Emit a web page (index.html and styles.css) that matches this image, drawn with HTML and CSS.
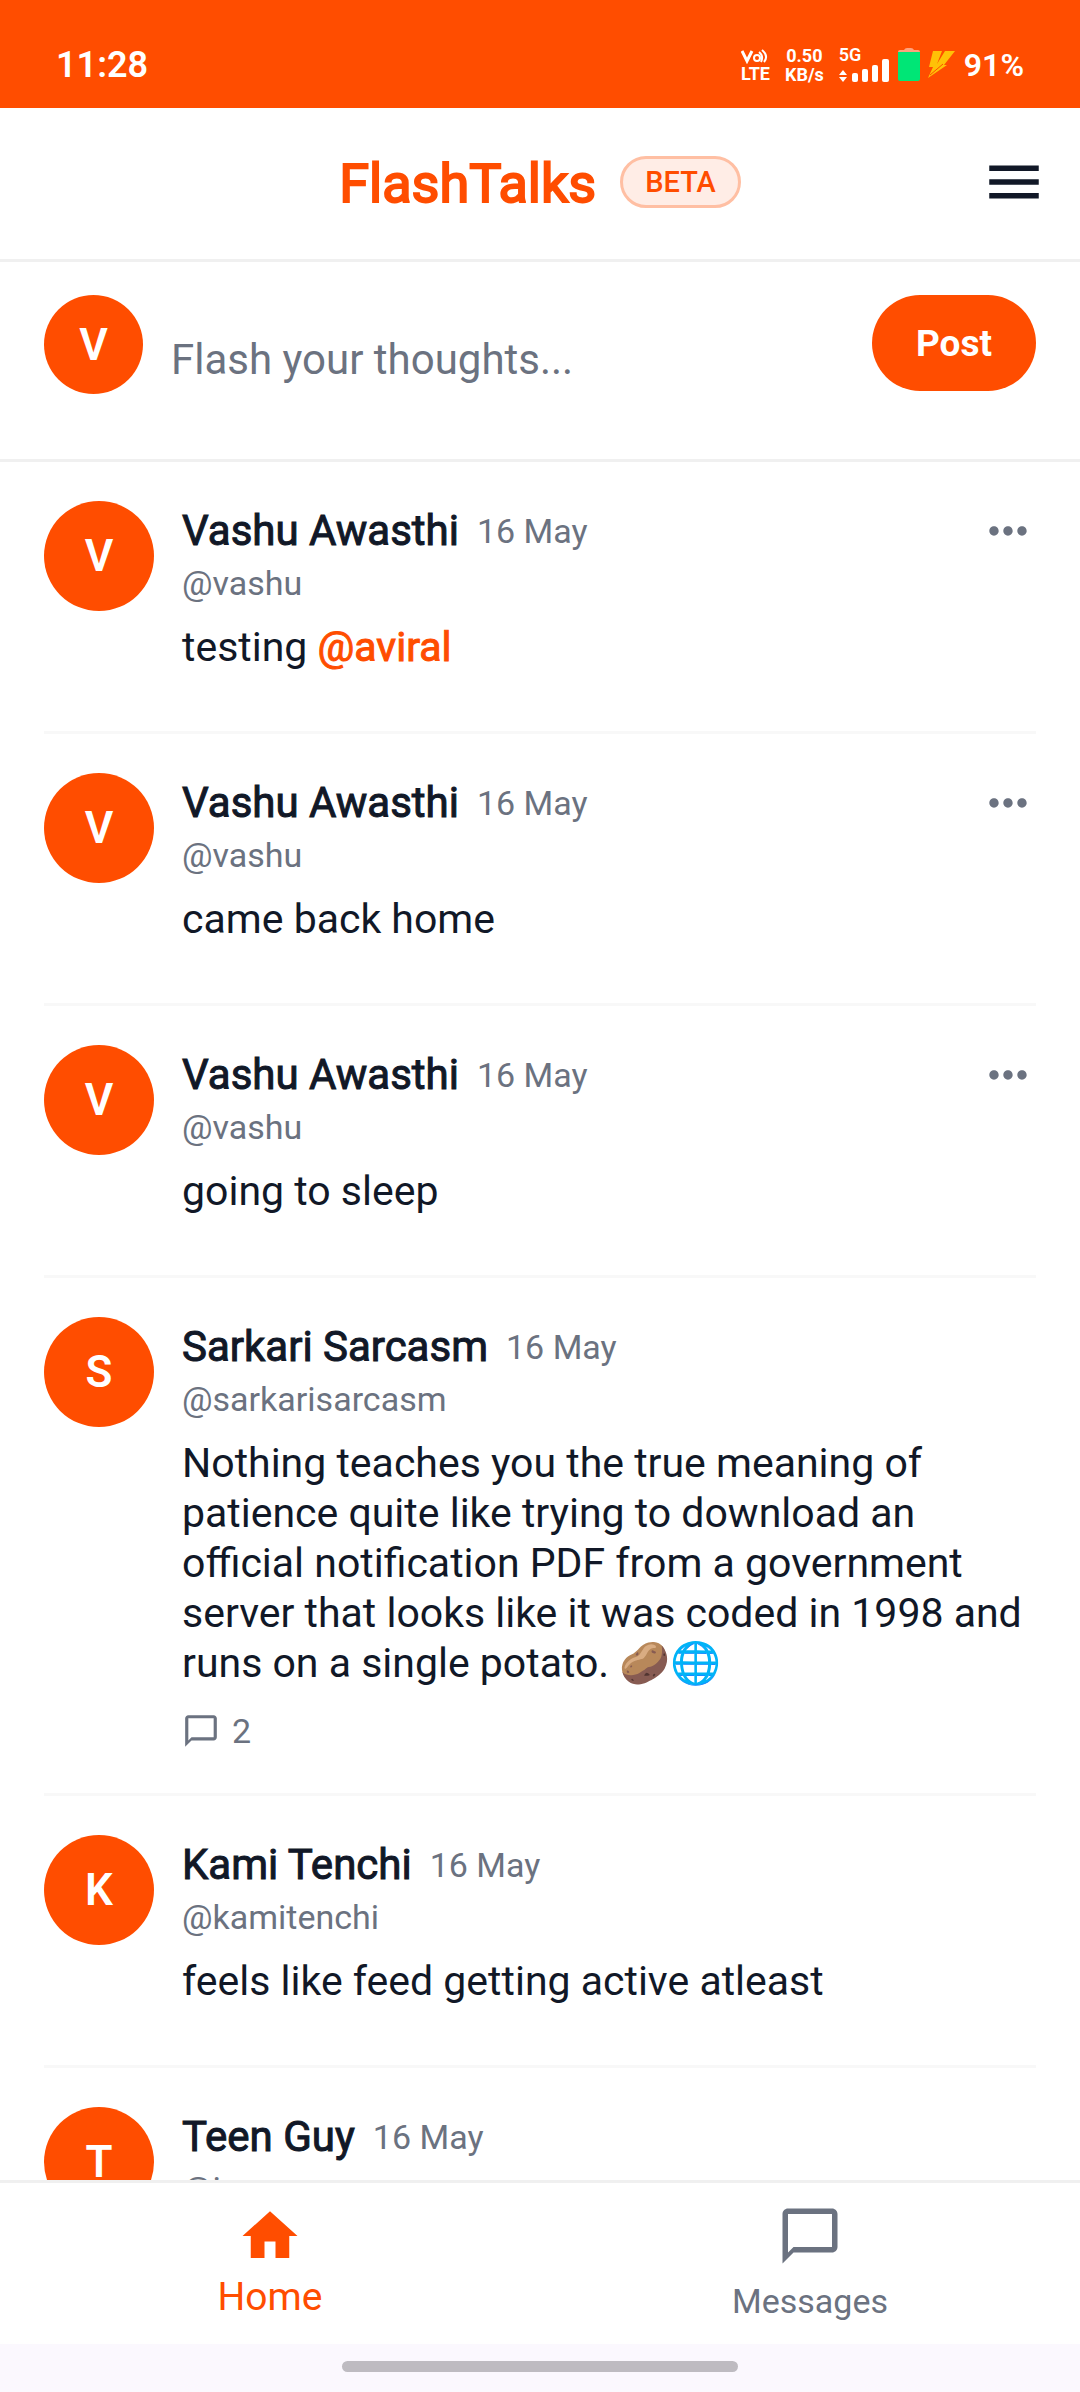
FILE: index.html
```html
<!DOCTYPE html>
<html lang="en">
<head>
<meta charset="utf-8">
<meta name="viewport" content="width=device-width, initial-scale=1">
<title>FlashTalks</title>
<link rel="stylesheet" href="styles.css">
</head>
<body>
<div class="app">
  <div class="status">
    <span class="clock">11:28</span>
    <div class="status-icons">
      <div class="stat volte">
        <svg width="28" height="16" viewBox="0 0 28 16" aria-hidden="true"><path d="M1 3l5 10 5-10" fill="none" stroke="#fff" stroke-width="3"/><circle cx="16" cy="10" r="3" fill="none" stroke="#fff" stroke-width="2"/><path d="M18 4q5 4 2 10M21 2q7 6 2 12" fill="none" stroke="#fff" stroke-width="2"/></svg>
        <span>LTE</span>
      </div>
      <div class="stat rate"><span>0.50</span><span>KB/s</span></div>
      <div class="signal">
        <span class="network">5G</span>
        <svg class="bars" width="51" height="23" viewBox="0 0 51 23" aria-hidden="true"><path d="M0 16l4-5 4 5zM0 18h8l-4 5z" fill="#fff"/><g fill="#fff"><rect x="13" y="14" width="6" height="9" rx="2"/><rect x="23" y="10" width="6" height="13" rx="2"/><rect x="33" y="6" width="6" height="17" rx="2"/><rect x="43" y="0" width="7" height="23" rx="2"/></g></svg>
      </div>
      <svg width="22" height="34" viewBox="0 0 22 34" aria-hidden="true"><path d="M2 2h4q1-2 3-2h4q2 0 3 2h4q2 0 2 2H0q0-2 2-2z" fill="#ffa27d"/><path d="M0 4h22v27q0 2-2 2H2q-2 0-2-2z" fill="#00e676"/></svg>
      <svg class="bolt" width="28" height="28" viewBox="0 0 28 28" aria-hidden="true"><path d="M5 0h9L9 13 17 0h10L16 14h3L0 27l5-11H1z" fill="#ffc107"/><path d="M2 24L15 13" stroke="#ff4d00" stroke-width="1"/></svg>
      <span class="percent">91%</span>
    </div>
  </div>

  <header class="header">
    <h1 class="brand">FlashTalks</h1>
    <span class="beta">BETA</span>
    <button class="icon-btn menu" aria-label="Menu"><svg width="66" height="66" viewBox="0 0 24 24"><path d="M3 18h18v-2H3v2zm0-5h18v-2H3v2zm0-7v2h18V6H3z" fill="#111827"/></svg></button>
  </header>

  <form class="composer">
    <span class="avatar small">V</span>
    <input class="thoughts" type="text" aria-label="Your post" placeholder="Flash your thoughts...">
    <button class="post-btn" type="button">Post</button>
  </form>

  <main class="feed">
    <article class="post">
      <span class="avatar">V</span>
      <div class="content">
        <div class="byline"><h2 class="name">Vashu Awasthi</h2><time class="date">16 May</time><button class="icon-btn more" aria-label="More"><svg width="56" height="56" viewBox="0 0 24 24"><path d="M6 10c-1.100 0-2 .9-2 2s.9 2 2 2 2-.9 2-2-.9-2-2-2zm12 0c-1.100 0-2 .9-2 2s.9 2 2 2 2-.9 2-2-.9-2-2-2zm-6 0c-1.100 0-2 .9-2 2s.9 2 2 2 2-.9 2-2-.9-2-2-2z" fill="#6b7280"/></svg></button></div>
        <span class="handle">@vashu</span>
        <p class="text">testing <a class="mention" href="#aviral">@aviral</a></p>
      </div>
    </article>
    <article class="post">
      <span class="avatar">V</span>
      <div class="content">
        <div class="byline"><h2 class="name">Vashu Awasthi</h2><time class="date">16 May</time><button class="icon-btn more" aria-label="More"><svg width="56" height="56" viewBox="0 0 24 24"><path d="M6 10c-1.100 0-2 .9-2 2s.9 2 2 2 2-.9 2-2-.9-2-2-2zm12 0c-1.100 0-2 .9-2 2s.9 2 2 2 2-.9 2-2-.9-2-2-2zm-6 0c-1.100 0-2 .9-2 2s.9 2 2 2 2-.9 2-2-.9-2-2-2z" fill="#6b7280"/></svg></button></div>
        <span class="handle">@vashu</span>
        <p class="text">came back home</p>
      </div>
    </article>
    <article class="post">
      <span class="avatar">V</span>
      <div class="content">
        <div class="byline"><h2 class="name">Vashu Awasthi</h2><time class="date">16 May</time><button class="icon-btn more" aria-label="More"><svg width="56" height="56" viewBox="0 0 24 24"><path d="M6 10c-1.100 0-2 .9-2 2s.9 2 2 2 2-.9 2-2-.9-2-2-2zm12 0c-1.100 0-2 .9-2 2s.9 2 2 2 2-.9 2-2-.9-2-2-2zm-6 0c-1.100 0-2 .9-2 2s.9 2 2 2 2-.9 2-2-.9-2-2-2z" fill="#6b7280"/></svg></button></div>
        <span class="handle">@vashu</span>
        <p class="text">going to sleep</p>
      </div>
    </article>
    <article class="post">
      <span class="avatar">S</span>
      <div class="content">
        <div class="byline"><h2 class="name">Sarkari Sarcasm</h2><time class="date">16 May</time></div>
        <span class="handle">@sarkarisarcasm</span>
        <p class="text">Nothing teaches you the true meaning of patience quite like trying to download an official notification PDF from a government server that looks like it was coded in 1998 and runs on a single potato. 🥔🌐</p>
        <button class="icon-btn replies" aria-label="2 replies"><svg width="38" height="38" viewBox="0 0 24 24"><path d="M20 2H4c-1.100 0-2 .9-2 2v18l4-4h14c1.100 0 2-.9 2-2V4c0-1.100-.9-2-2-2zm0 14H6l-2 2V4h16v12z" fill="#6b7280"/></svg><span>2</span></button>
      </div>
    </article>
    <article class="post">
      <span class="avatar">K</span>
      <div class="content">
        <div class="byline"><h2 class="name">Kami Tenchi</h2><time class="date">16 May</time></div>
        <span class="handle">@kamitenchi</span>
        <p class="text">feels like feed getting active atleast</p>
      </div>
    </article>
    <article class="post">
      <span class="avatar">T</span>
      <div class="content">
        <div class="byline"><h2 class="name">Teen Guy</h2><time class="date">16 May</time></div>
        <span class="handle">@iamguy</span>
      </div>
    </article>
  </main>

  <nav class="tabs">
    <a class="tab active" href="#home"><svg width="66" height="66" viewBox="0 0 24 24"><path d="M10 20v-6h4v6h5v-8h3L12 3 2 12h3v8z" fill="currentColor"/></svg><span>Home</span></a>
    <a class="tab" href="#messages"><svg width="66" height="66" viewBox="0 0 24 24"><path d="M20 2H4c-1.100 0-2 .9-2 2v18l4-4h14c1.100 0 2-.9 2-2V4c0-1.100-.9-2-2-2zm0 14H6l-2 2V4h16v12z" fill="currentColor"/></svg><span>Messages</span></a>
  </nav>
  <div class="gesture"><span class="pill"></span></div>
</div>
</body>
</html>
```
FILE: styles.css
```css
* { box-sizing: border-box; }
body {
  margin: 0;
  background: #fff;
  color: #111827;
  font-family: Roboto, "Liberation Sans", sans-serif;
}
h1, h2, p { margin: 0; font-size: inherit; }
button, input { font: inherit; border: 0; background: none; padding: 0; }
svg { display: block; flex: none; }

.app { display: flex; flex-direction: column; height: 100vh; }

.status {
  display: flex;
  justify-content: space-between;
  align-items: center;
  height: 108px;
  padding: 22px 56px 0;
  background: #ff4d00;
  color: #fff;
  font-weight: 600;
}
.clock { font-size: 36px; }
.status-icons { display: flex; align-items: center; gap: 8px; }
.stat {
  display: flex;
  flex-direction: column;
  align-items: center;
  margin-right: 7px;
  font-size: 18px;
  line-height: 19px;
  font-weight: 700;
}
.signal { display: grid; height: 34px; }
.network { grid-area: 1 / 1; font-size: 18px; line-height: 14px; }
.bars { grid-area: 1 / 1; align-self: end; }
.percent { font-size: 32px; }

.header {
  position: relative;
  display: flex;
  justify-content: center;
  align-items: center;
  gap: 24px;
  height: 154px;
  padding-bottom: 3px;
  border-bottom: 3px solid #f0f0f0;
}
.brand {
  padding-top: 3px;
  font-size: 54px;
  line-height: 68px;
  font-weight: 400;
  color: #ff4d00;
  -webkit-text-stroke: 2px #ff4d00;
}
.beta {
  padding: 0 22px;
  border: 3px solid #ffbfa3;
  border-radius: 26px;
  background: #ffede6;
  color: #ff4d00;
  font-size: 29px;
  line-height: 46px;
  font-weight: 500;
}
.menu { position: absolute; right: 33px; }

.composer {
  display: flex;
  align-items: flex-start;
  gap: 28px;
  height: 200px;
  padding: 33px 44px 0;
  border-bottom: 3px solid #f0f0f0;
}
.avatar {
  flex: none;
  display: grid;
  place-items: center;
  width: 110px;
  height: 110px;
  border-radius: 50%;
  background: #ff4d00;
  color: #fff;
  font-size: 44px;
  font-weight: 600;
}
.avatar.small { width: 99px; height: 99px; }
.thoughts { flex: 1; min-width: 0; height: 128px; font-size: 42px; outline: 0; }
.thoughts::placeholder { color: #6b7280; opacity: 1; }
.post-btn {
  height: 96px;
  padding: 0 44px;
  border-radius: 48px;
  background: #ff4d00;
  color: #fff;
  font-size: 37px;
  font-weight: 700;
}

.feed { flex: 1; min-height: 0; overflow: hidden; padding: 0 44px; }
.post { display: flex; gap: 28px; padding: 39px 0; border-bottom: 3px solid #f8f8f8; }
.content { flex: 1; min-width: 0; display: flex; flex-direction: column; }
.byline { display: flex; align-items: center; gap: 18px; height: 60px; }
.name { font-size: 42px; line-height: 50px; font-weight: 400; -webkit-text-stroke: 1px #111827; }
.date, .handle { font-size: 34px; color: #6b7280; }
.handle { line-height: 45px; }
.more { margin-left: auto; }
.text { padding: 16px 0 20px; font-size: 41px; line-height: 50px; }
.mention { color: #ff4d00; -webkit-text-stroke: 1px #ff4d00; text-decoration: none; }
.replies { display: flex; align-items: center; gap: 12px; height: 46px; font-size: 34px; color: #6b7280; }

.tabs { display: flex; height: 164px; border-top: 3px solid #f0f0f0; }
.tab {
  flex: 1;
  display: flex;
  flex-direction: column;
  align-items: center;
  padding-top: 20px;
  gap: 8px;
  color: #6b7280;
  font-size: 34px;
  line-height: 48px;
  text-decoration: none;
}
.tab.active { color: #ff4d00; font-size: 39px; line-height: 40px; }
.gesture { display: flex; justify-content: center; height: 48px; padding-top: 17px; background: #fbf8fe; }
.pill { width: 396px; height: 11px; border-radius: 6px; background: #bebbc1; }
```
